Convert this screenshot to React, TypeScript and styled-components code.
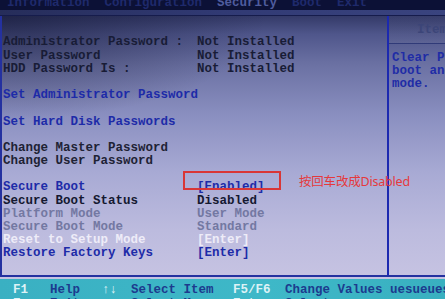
import React from "react";
import styled, { createGlobalStyle } from "styled-components";

const Global = createGlobalStyle`
  html, body { margin: 0; padding: 0; background: #c4c2e2; }
  body { width: 445px; height: 299px; overflow: hidden; }
`;

const Screen = styled.div`
  width: 445px;
  height: 299px;
  display: flex;
  flex-direction: column;
  overflow: hidden;
  background: #c3c1e1;
  font-family: "Liberation Mono", "DejaVu Sans Mono", monospace;
  font-weight: bold;
  font-size: 12.5px;
`;

const TopBar = styled.div`
  height: 10px;
  flex: none;
  background: #0c1136;
  display: flex;
  gap: 15px;
  padding-left: 7px;
  overflow: hidden;
  align-items: flex-start;
`;

const Tab = styled.span<{ $active?: boolean }>`
  line-height: 12px;
  margin-top: -3px;
  white-space: nowrap;
  color: ${(p) => (p.$active ? "#4f5c9e" : "#1f2a6c")};
`;

const Band = styled.div`
  height: 5px;
  flex: none;
  background: linear-gradient(90deg, #262d5a 0%, #313a74 50%, #3a447f 100%);
  border-bottom: 1px solid #161c4c;
`;

const Main = styled.div`
  height: 261px;
  flex: none;
  display: flex;
  background:
    radial-gradient(ellipse 60% 40% at 0% 0%, rgba(15, 18, 45, 0.55), rgba(15, 18, 45, 0) 100%),
    linear-gradient(180deg, #343a68 0%, #4f568b 7%, #6a70a2 18%, #8a8fc0 38%, #a8aad4 60%, #bcbbde 82%, #c6c3e2 100%);
`;

const LeftPanel = styled.div`
  width: 385px;
  flex: none;
  border-left: 2px solid #2431a0;
  border-bottom: 2px solid #2431a0;
  padding-top: 20.4px;
  box-sizing: content-box;
  height: calc(100% - 22.4px);
`;

const Row = styled.div`
  display: grid;
  grid-template-columns: 194px 1fr;
  padding-left: 1px;
  height: 13.2px;
  line-height: 13.2px;
  white-space: nowrap;
`;

const Spacer = styled.div`
  height: 13.2px;
`;

const Label = styled.span<{ $color: string }>`
  color: ${(p) => p.$color};
`;

const Value = styled.span<{ $color: string }>`
  position: relative;
  color: ${(p) => p.$color};
`;

const RedBox = styled.span`
  position: absolute;
  left: -14px;
  top: -10px;
  width: 94px;
  height: 15px;
  border: 2px solid #d93636;
`;

const Note = styled.span`
  position: absolute;
  left: 102px;
  top: -7px;
  line-height: 16px;
  font-family: "Noto Sans", "Noto Sans CJK SC", sans-serif;
  font-weight: normal;
  font-size: 12.5px;
  color: #e5393c;
  letter-spacing: -0.2px;
`;

const RightPanel = styled.div`
  flex: 1;
  border-left: 2px solid #1c29b0;
  border-bottom: 2px solid #2431a0;
  overflow: hidden;
  display: flex;
  flex-direction: column;
`;

const HelpHeader = styled.div`
  height: 27px;
  flex: none;
  border-bottom: 1px solid #303a78;
  padding-left: 28px;
  line-height: 28px;
  color: #3c4578;
  white-space: nowrap;
  background: linear-gradient(180deg, rgba(60, 66, 110, 0.35), rgba(120, 124, 160, 0.2));
`;

const HelpBody = styled.div`
  padding: 8px 0 0 3px;
  line-height: 13.2px;
  color: #1f2ca6;
  white-space: nowrap;
`;

const Gap = styled.div`
  height: 2px;
  flex: none;
  background: #c6c3e2;
`;

const BottomBar = styled.div`
  flex: 1;
  background: linear-gradient(90deg, #3ab0c2 0%, #3eb8c8 60%, #39b0c0 100%);
  display: grid;
  grid-template-columns: 37px 52px 29px 102px 52px 105px 1fr;
  grid-auto-rows: 13.5px;
  padding: 5px 0 0 13px;
  line-height: 13px;
  white-space: nowrap;
  overflow: hidden;
`;

const Key = styled.span`
  color: #dcf2f6;
`;

const Desc = styled.span`
  color: #1c3b8e;
`;

type Item = { label: string; lc: string; value?: string; vc?: string; mark?: boolean };

const NAVY = "#181c36";
const BLUE = "#1d2ba8";
const GRAY = "#7378a2";
const WHITE = "#eeecf8";

const rows: (Item | null)[] = [
  { label: "Administrator Password :", lc: NAVY, value: "Not Installed", vc: NAVY },
  { label: "User Password", lc: NAVY, value: "Not Installed", vc: NAVY },
  { label: "HDD Password Is :", lc: NAVY, value: "Not Installed", vc: NAVY },
  null,
  { label: "Set Administrator Password", lc: BLUE },
  null,
  { label: "Set Hard Disk Passwords", lc: BLUE },
  null,
  { label: "Change Master Password", lc: "#1e2234" },
  { label: "Change User Password", lc: "#1e2234" },
  null,
  { label: "Secure Boot", lc: BLUE, value: "[Enabled]", vc: BLUE, mark: true },
  { label: "Secure Boot Status", lc: "#141830", value: "Disabled", vc: "#141830" },
  { label: "Platform Mode", lc: GRAY, value: "User Mode", vc: GRAY },
  { label: "Secure Boot Mode", lc: GRAY, value: "Standard", vc: GRAY },
  { label: "Reset to Setup Mode", lc: WHITE, value: "[Enter]", vc: WHITE },
  { label: "Restore Factory Keys", lc: BLUE, value: "[Enter]", vc: BLUE },
];

const keys: [string, string][] = [
  ["F1", "Help"],
  ["↑↓", "Select Item"],
  ["F5/F6", "Change Values"],
];

const keys2: [string, string][] = [
  ["Esc", "Exit"],
  ["↔", "Select Menu"],
  ["Enter", "Select"],
];

export default function App() {
  return (
    <>
      <Global />
      <Screen>
        <TopBar>
          <Tab>Information</Tab>
          <Tab>Configuration</Tab>
          <Tab $active>Security</Tab>
          <Tab>Boot</Tab>
          <Tab>Exit</Tab>
        </TopBar>
        <Band />
        <Main>
          <LeftPanel>
            {rows.map((r, i) =>
              r ? (
                <Row key={i}>
                  <Label $color={r.lc}>{r.label}</Label>
                  <Value $color={r.vc || NAVY}>
                    {r.value}
                    {r.mark && (
                      <>
                        <RedBox />
                        <Note>按回车改成Disabled</Note>
                      </>
                    )}
                  </Value>
                </Row>
              ) : (
                <Spacer key={i} />
              )
            )}
          </LeftPanel>
          <RightPanel>
            <HelpHeader>Item Specific Help</HelpHeader>
            <HelpBody>
              <div>Clear PK to</div>
              <div>boot and</div>
              <div>mode.</div>
            </HelpBody>
          </RightPanel>
        </Main>
        <Gap />
        <BottomBar>
          {keys.map(([k, d]) => (
            <React.Fragment key={k}>
              <Key>{k}</Key>
              <Desc>{d}</Desc>
            </React.Fragment>
          ))}
          <Desc>uesueues</Desc>
          {keys2.map(([k, d]) => (
            <React.Fragment key={k}>
              <Key>{k}</Key>
              <Desc>{d}</Desc>
            </React.Fragment>
          ))}
          <Desc></Desc>
        </BottomBar>
      </Screen>
    </>
  );
}
